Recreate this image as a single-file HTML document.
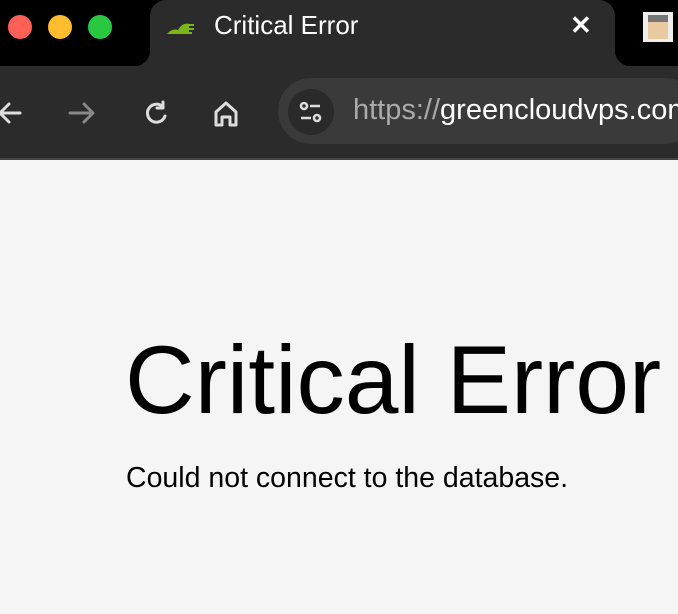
<!DOCTYPE html>
<html><head><style>
body{margin:0;width:678px;height:614px;overflow:hidden;background:#f5f5f5;font-family:"Liberation Sans",Arial,sans-serif;position:relative}
.top{position:absolute;left:0;top:0;width:678px;height:66px;background:#000}
.tab{position:absolute;left:150px;top:0;width:465px;height:66px;background:#2b2b2b;border-radius:16px 16px 0 0}
.tab:before{content:"";position:absolute;left:-16px;bottom:0;width:16px;height:16px;background:radial-gradient(circle at 0 0,#000 16px,#2b2b2b 16.5px)}
.tab:after{content:"";position:absolute;right:-16px;bottom:0;width:16px;height:16px;background:radial-gradient(circle at 100% 0,#000 16px,#2b2b2b 16.5px)}
.dot{position:absolute;top:15px;width:24px;height:24px;border-radius:50%}
.bar{position:absolute;left:0;top:66px;width:678px;height:92px;background:#2b2b2b;border-bottom:2px solid #444}
.url{position:absolute;left:278px;top:12px;width:420px;height:66px;border-radius:33px;background:#3a3a3a}
.ic{position:absolute;left:10px;top:11px;width:46px;height:46px;border-radius:50%;background:#2a2a2a}
</style></head><body>
<div class="top">
<div class="dot" style="left:8px;background:#fe5f57"></div>
<div class="dot" style="left:48px;background:#febc2e"></div>
<div class="dot" style="left:88px;background:#28c840"></div>
<div class="tab">
<svg style="position:absolute;left:16px;top:18px" width="32" height="22" viewBox="0 0 32 22"><path d="M1 16 Q6 10 12 12 Q16 4 24 6 L28 6 L28 8 L23 8 L23 10 L28 10 L28 12 L23 12 L23 14 L26 14 L26 16 Z" fill="#7cb518"/></svg>
<div style="position:absolute;left:64px;top:10px;color:#fff;font-size:26px">Critical Error</div>
<div style="position:absolute;left:420px;top:10px;color:#fff;font-size:26px;font-weight:bold">✕</div>
</div>
<div style="position:absolute;left:643px;top:12px;width:30px;height:30px;background:#eee"><div style="margin:3px 5px;width:20px;height:24px;background:#e8c9a0;border-top:7px solid #777;box-sizing:border-box"></div></div>
</div>
<div class="bar">
<svg style="position:absolute;left:0;top:32px" width="270" height="30" viewBox="0 0 270 30" fill="none" stroke-width="3" stroke-linecap="round" stroke-linejoin="round">
<path d="M20 15 H1 M9 6 L0 15 L9 24" stroke="#ddd"/>
<path d="M70 15 H92 M84 6 L93 15 L84 24" stroke="#888"/>
<path d="M163 9 A9 9 0 1 0 165 18 M163 4 V10 H157" stroke="#ddd"/>
<path d="M216 27 V14 L226 5 L236 14 V27 H230 V19 H222 V27 Z" stroke="#ddd"/>
</svg>
<div class="url"><div class="ic">
<svg width="46" height="46" viewBox="0 0 46 46" fill="none" stroke="#ddd" stroke-width="2.6"><circle cx="16" cy="17" r="3"/><path d="M22 17 H32 M13 29 H23"/><circle cx="29" cy="29" r="3"/></svg>
</div>
<div style="position:absolute;left:75px;top:16px;font-size:29px;color:#aaa;white-space:nowrap">https://<span style="color:#fff">greencloudvps.com</span></div>
</div>
</div>
<div style="position:absolute;left:125px;top:326px;font-size:96.5px;color:#000;white-space:nowrap">Critical Error</div>
<div style="position:absolute;left:126px;top:462px;font-size:28.5px;color:#000;white-space:nowrap">Could not connect to the database.</div>
</body></html>
